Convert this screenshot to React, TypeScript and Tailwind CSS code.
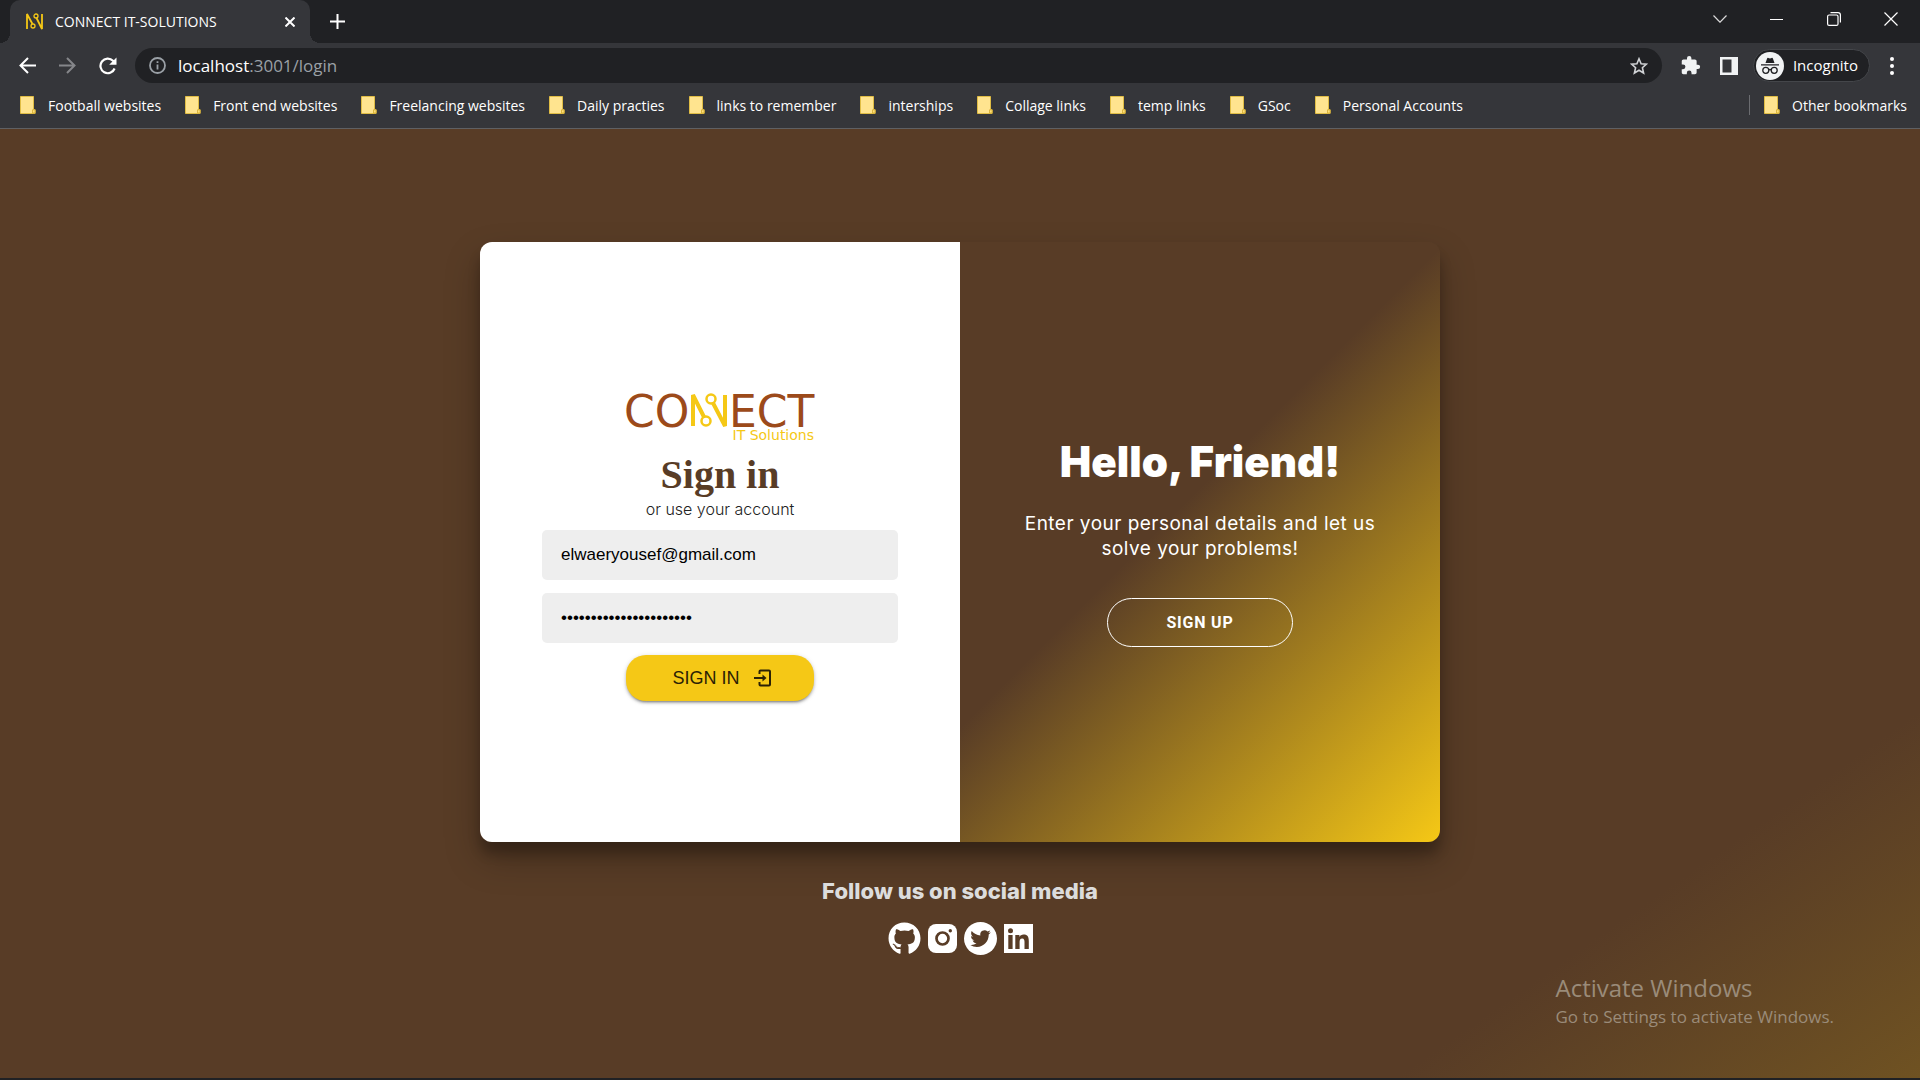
import React from "react";
import { FaGithub } from "react-icons/fa";

const bookmarks = [
  "Football websites",
  "Front end websites",
  "Freelancing websites",
  "Daily practies",
  "links to remember",
  "interships",
  "Collage links",
  "temp links",
  "GSoc",
  "Personal Accounts",
];

function Folder() {
  return (
    <svg className="h-[18px] w-4 shrink-0" viewBox="0 0 16 18" aria-hidden="true">
      <path d="M.5.5h13v13.2h1.6v3.8H.5z" fill="#ffe48f" stroke="#e0bd45" />
      <path d="M12.5 17v-3.2h2.6V17z" fill="#ffe07a" stroke="#d3ab2e" strokeWidth=".8" />
    </svg>
  );
}

function Bookmark({ label }: { label: string }) {
  return (
    <a href="#" className="flex items-center gap-3 whitespace-nowrap">
      <Folder />
      {label}
    </a>
  );
}

function TabStrip() {
  return (
    <div className="flex h-[43px] items-stretch bg-[#202124] pl-[10px]">
      <div className="relative flex w-[300px] items-center rounded-t-[10px] bg-[#35363a] pr-[10px] pl-4">
        <span className="absolute bottom-0 -left-[10px] size-[10px] bg-[radial-gradient(circle_at_0_0,#202124_10px,#35363a_10px)]" />
        <span className="absolute -right-[10px] bottom-0 size-[10px] bg-[radial-gradient(circle_at_100%_0,#202124_10px,#35363a_10px)]" />
        <svg className="size-[17px]" viewBox="0 0 17 17" fill="none" stroke="#f5c816" aria-hidden="true">
          <path d="M1 16V1L6.500 11M16 1V16L10.500 5" strokeWidth="1.800" />
          <circle cx="7" cy="13" r="2" strokeWidth="1.300" />
          <circle cx="10" cy="3" r="2" strokeWidth="1.300" />
        </svg>
        <span className="ml-3 flex-1 text-[14px]">CONNECT IT-SOLUTIONS</span>
        <button aria-label="Close tab" className="grid size-5 place-items-center">
          <svg className="size-[10px]" viewBox="0 0 10 10" stroke="#fff" strokeWidth="2" aria-hidden="true">
            <path d="M.5.5l9 9M9.500.5l-9 9" />
          </svg>
        </button>
      </div>
      <button aria-label="New tab" className="ml-[18px] grid w-[18px] place-items-center">
        <svg className="size-[15px]" viewBox="0 0 15 15" stroke="#fff" strokeWidth="2" aria-hidden="true">
          <path d="M7.500 0v15M0 7.500h15" />
        </svg>
      </button>
      <div className="ml-auto flex pb-[5px]">
        <button aria-label="Search tabs" className="grid w-[57px] place-items-center">
          <svg className="h-[8px] w-[14px]" viewBox="0 0 14 8" fill="none" stroke="#dadada" strokeWidth="1.200" aria-hidden="true">
            <path d="M.5.5L7 7.200 13.500.5" />
          </svg>
        </button>
        <button aria-label="Minimize" className="grid w-[57px] place-items-center">
          <span className="h-px w-[13px] bg-white" />
        </button>
        <button aria-label="Restore" className="grid w-[57px] place-items-center">
          <svg className="size-[14px]" viewBox="0 0 14 14" fill="none" stroke="#fff" strokeWidth="1.200" aria-hidden="true">
            <rect x=".6" y="3" width="10.400" height="10.400" rx="1.500" />
            <path d="M3.500.6h7.500a2.400 2.400 0 0 1 2.400 2.400v7.500" />
          </svg>
        </button>
        <button aria-label="Close window" className="grid w-[58px] place-items-center">
          <svg className="size-[14px]" viewBox="0 0 14 14" stroke="#fff" strokeWidth="1.200" aria-hidden="true">
            <path d="M.5.5l13 13M13.500.5l-13 13" />
          </svg>
        </button>
      </div>
    </div>
  );
}

function Toolbar() {
  return (
    <div className="flex h-[45px] items-center bg-[#35363a] pr-[26px] pl-[17px]">
      <button aria-label="Back" className="mr-5 grid size-5 place-items-center">
        <svg className="size-[17px]" viewBox="0 0 17 17" fill="none" stroke="#fff" strokeWidth="2" aria-hidden="true">
          <path d="M17 8.500H2M9 1L1.500 8.500 9 16" />
        </svg>
      </button>
      <button aria-label="Forward" className="mr-[21px] grid size-5 place-items-center">
        <svg className="size-[17px]" viewBox="0 0 17 17" fill="none" stroke="#85868a" strokeWidth="2" aria-hidden="true">
          <path d="M0 8.500h15M8 1l7.500 7.500L8 16" />
        </svg>
      </button>
      <button aria-label="Reload" className="mr-[17px] grid size-5 place-items-center">
        <svg className="size-[18px]" viewBox="0 0 18 18" fill="none" aria-hidden="true">
          <path d="M15.600 11.500A7.300 7.300 0 1 1 14 3.800L16 6" stroke="#fff" strokeWidth="2.200" />
          <path d="M17.500.5v7.300h-7.300z" fill="#fff" />
        </svg>
      </button>
      <div className="flex h-[35px] flex-1 items-center rounded-full bg-[#202124] pr-[14px] pl-[14px]">
        <svg className="size-[17px]" viewBox="0 0 17 17" fill="none" stroke="#9aa0a6" strokeWidth="1.800" aria-hidden="true">
          <circle cx="8.500" cy="8.500" r="7.500" />
          <path d="M8.500 7.500V12.500M8.500 4.300V6" />
        </svg>
        <span className="ml-[12px] flex-1 text-[17px] text-[#9aa0a6]">
          <span className="text-white">localhost</span>:3001/login
        </span>
        <button aria-label="Bookmark this page" className="grid place-items-center">
          <svg className="size-[18px]" viewBox="0 0 18 18" fill="none" stroke="#d0d2d5" strokeWidth="1.600" aria-hidden="true">
            <path d="M9 1.800l2.100 5 5.300.4-4 3.500 1.200 5.300L9 13.200 4.400 16l1.200-5.300-4-3.500 5.300-.4z" />
          </svg>
        </button>
      </div>
      <button aria-label="Extensions" className="ml-[18px]">
        <svg className="size-[21px]" viewBox="0 0 24 24" fill="#f1f3f4" aria-hidden="true">
          <path d="M20.500 11H19V7c0-1.100-.9-2-2-2h-4V3.500a2.500 2.500 0 0 0-5 0V5H4c-1.100 0-2 .9-2 2v3.800h1.500a2.700 2.700 0 0 1 0 5.400H2V20c0 1.100.9 2 2 2h3.800v-1.500a2.700 2.700 0 0 1 5.400 0V22H17c1.100 0 2-.9 2-2v-4h1.500a2.500 2.500 0 0 0 0-5z" />
        </svg>
      </button>
      <button aria-label="Side panel" className="ml-[19px]">
        <svg className="size-[18px]" viewBox="0 0 18 18" aria-hidden="true">
          <path fill="#f1f3f4" fillRule="evenodd" d="M0 0h18v18H0zM2.500 2.500v13h9v-13z" />
        </svg>
      </button>
      <button className="ml-[15px] flex h-[33px] items-center rounded-full border border-[#44464a] bg-[#202124] pr-[11px] pl-[2px] text-[15px]">
        <svg className="mr-[9px] size-[28px]" viewBox="0 0 28 28" aria-hidden="true">
          <circle cx="14" cy="14" r="14" fill="#f1f3f4" />
          <path d="M9.500 11l1.600-4.600c.2-.5.700-.7 1.200-.5l1.700.6 1.700-.6c.5-.2 1 0 1.200.5l1.600 4.600zM5 12.200h18v1.400H5z" fill="#202124" />
          <g fill="none" stroke="#202124" strokeWidth="1.300">
            <circle cx="9.800" cy="18.300" r="3" />
            <circle cx="18.200" cy="18.300" r="3" />
            <path d="M12.800 18q1.200-1 2.400 0" />
          </g>
        </svg>
        Incognito
      </button>
      <button aria-label="Menu" className="ml-[20px] flex flex-col gap-[3px]">
        <span className="size-[4px] rounded-full bg-white" />
        <span className="size-[4px] rounded-full bg-white" />
        <span className="size-[4px] rounded-full bg-white" />
      </button>
    </div>
  );
}

function BookmarkBar() {
  return (
    <nav className="flex h-[41px] items-center border-b border-[#5f6063] bg-[#35363a] pr-[13px] pb-[6px] pl-[20px] text-[14px]">
      <div className="flex gap-6">
        {bookmarks.map((b) => (
          <Bookmark key={b} label={b} />
        ))}
      </div>
      <span className="mr-[14px] ml-auto h-5 w-px bg-[#6b6c70]" />
      <Bookmark label="Other bookmarks" />
    </nav>
  );
}

function Logo() {
  return (
    <svg className="h-[60px] w-[188px]" viewBox="0 -10 188 60" overflow="visible" role="img" aria-label="Connect IT Solutions">
      <g fontFamily="DejaVu Sans, sans-serif">
        <text x="-2" y="34" fontSize="44" fill="#9c4a1a">CO</text>
        <text x="103" y="34" fontSize="44" fill="#9c4a1a">ECT</text>
        <text x="188" y="47" fontSize="14" textAnchor="end" fill="#f5c816">IT Solutions</text>
      </g>
      <g fill="none" stroke="#f5c816">
        <path d="M67 33V2L78 24M99 2V33L87 10" strokeWidth="4" strokeLinejoin="bevel" />
        <circle cx="80" cy="28" r="4.500" strokeWidth="2.500" />
        <circle cx="85" cy="6" r="4.500" strokeWidth="2.500" />
      </g>
    </svg>
  );
}

function SignInForm() {
  return (
    <form className="flex w-1/2 flex-col items-center justify-center bg-white px-[62px]" onSubmit={(e) => e.preventDefault()}>
      <Logo />
      <h1 className="mt-2 font-['Liberation_Serif',serif] text-[40px] leading-[48px] font-bold text-[#583c26]">Sign in</h1>
      <p className="font-[Inter,sans-serif] text-[16px] leading-5 font-light text-[#222]">or use your account</p>
      <input
        type="email"
        aria-label="Email"
        defaultValue="elwaeryousef@gmail.com"
        className="mt-[11px] h-[50px] w-full rounded-[5px] bg-[#eee] px-[19px] font-['Liberation_Sans',sans-serif] text-[17px] text-black"
      />
      <input
        type="password"
        aria-label="Password"
        defaultValue="connectsolutions123456"
        className="mt-[13px] h-[50px] w-full rounded-[5px] bg-[#eee] px-[19px] font-['Liberation_Sans',sans-serif] text-[17px] text-black"
      />
      <button className="mt-3 flex h-[46px] w-[188px] items-center justify-center gap-[14px] rounded-[20px] bg-[#f5c816] pl-1 font-['Liberation_Sans',sans-serif] text-[18px] text-[#2b2105] shadow-[0_3px_2px_-2px_rgba(0,0,0,.25),0_2px_3px_rgba(0,0,0,.2),0_1px_5px_rgba(0,0,0,.15)]">
        SIGN IN
        <svg className="size-[18px]" viewBox="0 0 18 18" fill="none" stroke="#2b2105" strokeWidth="2" aria-hidden="true">
          <path d="M5.500 5V2.500a1 1 0 0 1 1-1H15a1 1 0 0 1 1 1v13a1 1 0 0 1-1 1H6.500a1 1 0 0 1-1-1V13M0 9h10" />
          <path d="M8.500 5.500L12.500 9l-4 3.500z" fill="#2b2105" stroke="none" />
        </svg>
      </button>
    </form>
  );
}

function WelcomePanel() {
  return (
    <section className="flex w-1/2 flex-col items-center justify-center bg-[linear-gradient(135deg,#583c26_45%,#f5c816_100%)] px-[50px] text-center font-[Inter,sans-serif]">
      <h2 className="text-[42px] leading-[50px] font-black">Hello, Friend!</h2>
      <p className="mt-[24px] mb-[37px] w-[360px] text-[19px] leading-[25px] tracking-wide">
        Enter your personal details and let us solve your problems!
      </p>
      <button className="h-[49px] w-[186px] rounded-[25px] border border-white font-[Roboto,sans-serif] text-[16px] font-bold tracking-wider">SIGN UP</button>
    </section>
  );
}

function SocialLinks() {
  return (
    <div className="flex items-center gap-[7px]">
      <a href="#" aria-label="GitHub">
        <FaGithub className="size-[33px]" />
      </a>
      <a href="#" aria-label="Instagram">
        <svg className="size-[29px]" viewBox="0 0 29 29" aria-hidden="true">
          <rect width="29" height="29" rx="8" fill="#fff" />
          <circle cx="14.500" cy="14.500" r="6" fill="none" stroke="#583c26" strokeWidth="2.700" />
          <circle cx="22.300" cy="6.700" r="1.700" fill="#583c26" />
        </svg>
      </a>
      <a href="#" aria-label="Twitter">
        <svg className="size-[33px]" viewBox="0 0 34 34" aria-hidden="true">
          <circle cx="17" cy="17" r="17" fill="#fff" />
          <path
            transform="translate(6.500 6.500) scale(.88)"
            fill="#583c26"
            d="M23.950 4.570a10 10 0 0 1-2.820.770 4.960 4.960 0 0 0 2.160-2.720c-.950.550-2 .950-3.130 1.180a4.920 4.920 0 0 0-8.380 4.480C7.690 8.090 4.070 6.130 1.640 3.160a4.820 4.820 0 0 0-.670 2.480c0 1.710.870 3.210 2.190 4.100a4.900 4.900 0 0 1-2.230-.620v.060a4.920 4.920 0 0 0 3.950 4.830 5 5 0 0 1-2.210.080 4.940 4.940 0 0 0 4.600 3.420A9.870 9.870 0 0 1 0 19.540a14 14 0 0 0 7.550 2.210c9.050 0 14-7.500 14-13.980 0-.210 0-.420-.020-.630a9.940 9.940 0 0 0 2.460-2.550z"
          />
        </svg>
      </a>
      <a href="#" aria-label="LinkedIn">
        <svg className="size-[29px]" viewBox="0 0 29 29" aria-hidden="true">
          <path fill="#fff" d="M0 0h29v29H0z" />
          <g fill="#583c26">
            <circle cx="6.500" cy="6.700" r="2.500" />
            <path d="M4.300 11h4.300v14H4.300zM11.300 11h4.100v1.900c.8-1.400 2.200-2.300 4.200-2.300 4.200 0 5.200 2.700 5.200 6.600V25h-4.300v-6.900c0-1.900-.3-3.700-2.300-3.700-2.100 0-2.600 1.700-2.600 3.600V25h-4.300z" />
          </g>
        </svg>
      </a>
    </div>
  );
}

export default function App() {
  return (
    <div className="flex min-h-screen flex-col border-b-2 border-[#202124] bg-[#202124] font-['Open_Sans',sans-serif] text-white">
      <header>
        <TabStrip />
        <Toolbar />
        <BookmarkBar />
      </header>
      <main className="relative flex flex-1 flex-col items-center bg-[linear-gradient(145deg,#583c26_84%,#6f5222_100%)] pt-[113px]">
        <div className="flex min-h-[600px] w-full max-w-[960px] overflow-hidden rounded-[12px] shadow-[0_17px_35px_rgba(0,0,0,.25),0_12px_12px_rgba(0,0,0,.22)]">
          <SignInForm />
          <WelcomePanel />
        </div>
        <h3 className="mt-[34px] font-[Inter,sans-serif] text-[22px] leading-[30px] font-extrabold text-[#dcdcdc]">Follow us on social media</h3>
        <div className="mt-4">
          <SocialLinks />
        </div>
        <aside className="absolute right-[86px] bottom-[48px] text-[#9a8b79]">
          <p className="text-[24px] leading-[32px]">Activate Windows</p>
          <p className="text-[17px] leading-[26px]">Go to Settings to activate Windows.</p>
        </aside>
      </main>
    </div>
  );
}
